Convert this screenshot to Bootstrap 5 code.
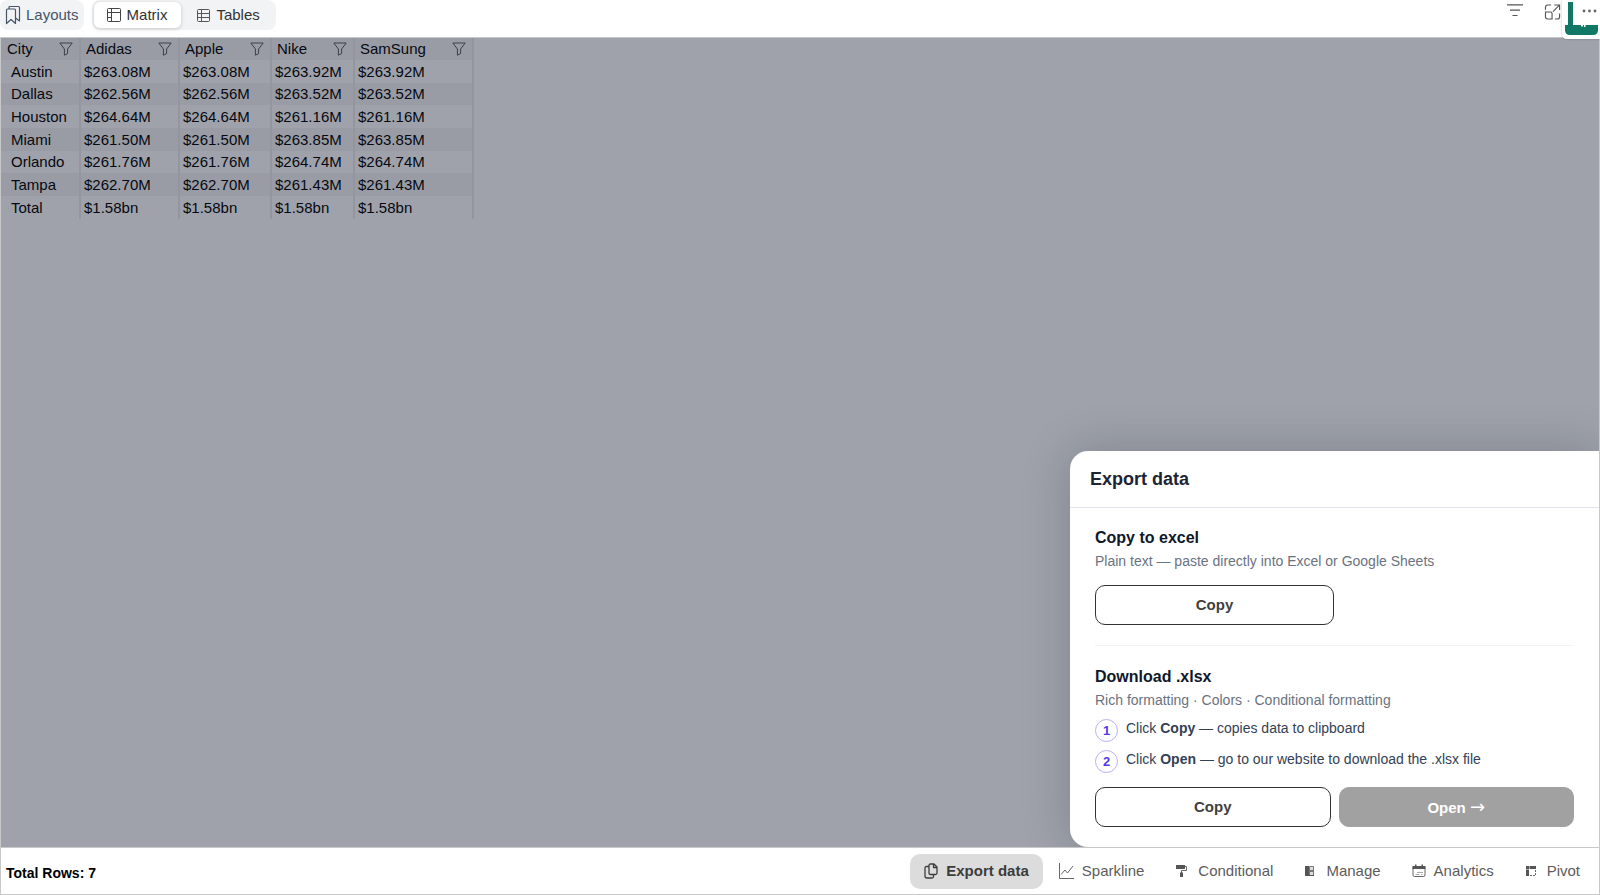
<!DOCTYPE html>
<html lang="en">
<head>
<meta charset="utf-8">
<meta name="viewport" content="width=device-width, initial-scale=1">
<title>Matrix</title>
<link href="https://cdn.jsdelivr.net/npm/bootstrap@5.3.0/dist/css/bootstrap.min.css" rel="stylesheet">
<style>
  body { font-family: "Liberation Sans", Arial, sans-serif; font-size: 15px; line-height: 20px; color: #000; background: #fff; }
  button { font-family: inherit; }
  svg { flex: none; display: block; }
  .topbar { height: 37px; }
  .tool { height: 30px; border: 0; border-radius: 8px; background: #f1f3f5; color: #475569; padding: 0 5px; gap: 5px; }
  .tab-set { height: 30px; background: #f1f3f5; border-radius: 8px; padding: 2px; gap: 2px; }
  .tab-set button { border: 0; background: transparent; color: #333; border-radius: 6px; padding: 0 14px 0 13px; gap: 6px; height: 26px; }
  .tab-set button.active { background: #fff; box-shadow: 0 1px 4px rgba(0,0,0,.18); }
  .icon-btn { border: 0; background: transparent; padding: 0; }
  .view-tools { margin-right: 38px; padding-top: 4px; gap: 21px; }
  .brand-mark { top: 0; right: 0; width: 38px; height: 39px; filter: drop-shadow(0 0 1px rgba(0,0,0,.25)); }
  .brand-mark .icon-btn { top: 7px; right: 3px; }
  .stage { border: 1px solid #c8c8c8; overflow: hidden; }
  .veil { inset: 0; background: rgba(15,23,42,.4); }
  .matrix { table-layout: fixed; width: 473px; border-collapse: separate; border-spacing: 0; }
  .matrix th, .matrix td { padding: 0 3px; border-right: 2px solid #ebebeb; white-space: nowrap; font-weight: 400; height: 23px; line-height: 22px; }
  .matrix tr:nth-child(3n+2) > * { height: 22px; }
  .matrix tr:nth-child(even) > * { background: #f6f6f6; }
  .matrix tbody tr th { padding-left: 10px; }
  .matrix thead th { height: 22px; padding: 0 6px 0 5px; background: #f6f6f6; }
  .matrix thead th:first-child { padding-left: 6px; }
  .export { right: 0; bottom: 0; width: 529px; background: #fff; border-radius: 18px 0 0 18px; box-shadow: 0 0 48px rgba(15,23,42,.22); color: #0f172a; }
  .export header { height: 57px; padding: 0 20px; border-bottom: 1px solid #e2e4ec; }
  .export h1 { font-size: 18px; line-height: 24px; font-weight: 700; color: #1e2433; }
  .export-body { padding: 19px 25px 20px; }
  .export h2 { font-size: 16px; line-height: 22px; font-weight: 700; margin: 0 0 2px; }
  .hint { font-size: 14px; line-height: 20px; color: #6b7280; margin: 0 0 14px; }
  .act { height: 40px; border-radius: 10px; border: 1px solid #333; background: #fff; color: #404040; font-weight: 700; }
  .act.half { width: 239px; }
  .act.filled { background: #a1a1a1; border-color: #a1a1a1; color: #fff; opacity: 1; }
  .arrow { font-family: "DejaVu Sans", sans-serif; font-weight: 400; font-size: 18px; line-height: 20px; }
  .rule { height: 1px; background: #f1f3f5; margin: 20px 0; }
  .steps { list-style: none; margin: 0 0 14px; padding: 0; gap: 7px; }
  .steps li { font-size: 14px; line-height: 20px; gap: 8px; color: #334155; }
  .num { width: 23px; height: 23px; border: 1px solid #b8b0fa; border-radius: 50%; font-size: 13px; font-weight: 700; color: #4f3bea; margin-top: 1px; }
  .statusbar { height: 47px; padding: 0 4px 0 5px; border: 1px solid #c8c8c8; border-top: 0; }
  .total { font-size: 14px; padding-top: 3px; }
  .actions button { border: 0; background: transparent; color: #5c5c5c; height: 35px; padding: 0 15px 0 12px; gap: 8px; border-radius: 10px; }
  .actions button.active { background: #dcdcdc; color: #3c3c3c; font-weight: 700; padding: 0 14px; }
</style>
</head>
<body class="d-flex flex-column min-vh-100">
<svg width="0" height="0" class="position-absolute" aria-hidden="true">
  <symbol id="funnel" viewBox="0 0 14 14"><path d="M.8 1h12.4L8.600 7v4.600L5.400 13.200V7z" fill="none" stroke="#5a5a5a" stroke-linejoin="round"/></symbol>
</svg>

<nav class="topbar d-flex align-items-start position-relative">
  <button class="tool d-flex align-items-center" type="button">
    <svg width="16" height="20" viewBox="0 0 16 20" fill="none" stroke="#475569" stroke-width="1.200" stroke-linejoin="round"><path d="M1.500 5q0-1 1-1h7q1 0 1 1v13.500L6 14.500l-4.500 4z"/><path d="M4 4V2.500Q4 1.500 5 1.500h8.500q1 0 1 1V16l-4-3"/></svg>
    <span>Layouts</span>
  </button>
  <div class="tab-set d-flex ms-2" role="tablist">
    <button class="active d-flex align-items-center" type="button" role="tab">
      <svg width="14" height="14" viewBox="0 0 14 14" fill="none" stroke="#444"><rect x=".5" y=".5" width="13" height="13" rx="1"/><path d="M.5 4.500h13M4.500 .5v13M.5 9.500h4"/></svg>
      <span>Matrix</span>
    </button>
    <button class="d-flex align-items-center" type="button" role="tab">
      <svg width="14" height="14" viewBox="0 0 14 14" fill="none" stroke="#555"><rect x="1.500" y="1.500" width="12" height="12" rx="1"/><path d="M1.500 5.500h12M1.500 9.500h12M5.500 1.500v12"/></svg>
      <span>Tables</span>
    </button>
  </div>
  <div class="view-tools d-flex align-items-start ms-auto">
    <button class="icon-btn" type="button" aria-label="Filters"><svg width="16" height="14" viewBox="0 0 16 14" stroke="#555" stroke-width="1.200"><path d="M0 .8h16M3 6.200h10M5.500 11.500h5"/></svg></button>
    <button class="icon-btn" type="button" aria-label="Focus mode"><svg width="18" height="16" viewBox="0 0 18 17" fill="none" stroke="#555" stroke-width="1.200"><path d="M7 1H3.500Q1 1 1 3.500V6M1 8.500h5.500q1.500 0 1.500 1.500v6H3.500Q1 16 1 13.500zM11 16h2.500q2.500 0 2.500-2.500V10M10.500 1H16v5.500M16 1L9 8"/></svg></button>
  </div>
  <div class="brand-mark position-absolute z-3">
    <svg width="38" height="39" viewBox="0 0 38 39"><path d="M0 0h38v39H5q-5 0-5-5z" fill="#fff"/><path d="M6 2h5v23h25v5q0 5-5 5H8q-5 0-5-5v-5h3z" fill="#117865"/><path d="M19 25v1.500h2V25zM22 25v2h1.500v-2z" fill="#fff"/></svg>
    <button class="icon-btn position-absolute" type="button" aria-label="More options"><svg width="15" height="8" viewBox="0 0 15 8" fill="#666"><circle cx="2" cy="4" r="1.400"/><circle cx="7.500" cy="4" r="1.400"/><circle cx="13" cy="4" r="1.400"/></svg></button>
  </div>
</nav>

<main class="stage position-relative flex-grow-1">
  <table class="matrix">
    <colgroup><col style="width:80px"><col style="width:99px"><col style="width:92px"><col style="width:83px"><col style="width:119px"></colgroup>
    <thead>
      <tr>
        <th scope="col"><div class="d-flex align-items-center justify-content-between">City <svg width="14" height="14"><use href="#funnel"/></svg></div></th>
        <th scope="col"><div class="d-flex align-items-center justify-content-between">Adidas <svg width="14" height="14"><use href="#funnel"/></svg></div></th>
        <th scope="col"><div class="d-flex align-items-center justify-content-between">Apple <svg width="14" height="14"><use href="#funnel"/></svg></div></th>
        <th scope="col"><div class="d-flex align-items-center justify-content-between">Nike <svg width="14" height="14"><use href="#funnel"/></svg></div></th>
        <th scope="col"><div class="d-flex align-items-center justify-content-between">SamSung <svg width="14" height="14"><use href="#funnel"/></svg></div></th>
      </tr>
    </thead>
    <tbody>
      <tr><th scope="row">Austin</th><td>$263.08M</td><td>$263.08M</td><td>$263.92M</td><td>$263.92M</td></tr>
      <tr><th scope="row">Dallas</th><td>$262.56M</td><td>$262.56M</td><td>$263.52M</td><td>$263.52M</td></tr>
      <tr><th scope="row">Houston</th><td>$264.64M</td><td>$264.64M</td><td>$261.16M</td><td>$261.16M</td></tr>
      <tr><th scope="row">Miami</th><td>$261.50M</td><td>$261.50M</td><td>$263.85M</td><td>$263.85M</td></tr>
      <tr><th scope="row">Orlando</th><td>$261.76M</td><td>$261.76M</td><td>$264.74M</td><td>$264.74M</td></tr>
      <tr><th scope="row">Tampa</th><td>$262.70M</td><td>$262.70M</td><td>$261.43M</td><td>$261.43M</td></tr>
      <tr><th scope="row">Total</th><td>$1.58bn</td><td>$1.58bn</td><td>$1.58bn</td><td>$1.58bn</td></tr>
    </tbody>
  </table>
  <div class="veil position-absolute"></div>
  <section class="export position-absolute" role="dialog" aria-labelledby="export-title">
    <header class="d-flex align-items-center"><h1 id="export-title" class="m-0">Export data</h1></header>
    <div class="export-body">
      <h2>Copy to excel</h2>
      <p class="hint">Plain text — paste directly into Excel or Google Sheets</p>
      <button class="act half" type="button">Copy</button>
      <div class="rule"></div>
      <h2>Download .xlsx</h2>
      <p class="hint mb-2">Rich formatting · Colors · Conditional formatting</p>
      <ol class="steps d-flex flex-column">
        <li class="d-flex"><span class="num d-flex align-items-center justify-content-center">1</span><span>Click <b>Copy</b> — copies data to clipboard</span></li>
        <li class="d-flex"><span class="num d-flex align-items-center justify-content-center">2</span><span>Click <b>Open</b> — go to our website to download the .xlsx file</span></li>
      </ol>
      <div class="d-flex gap-2">
        <button class="act flex-fill w-50" type="button">Copy</button>
        <button class="act filled flex-fill w-50" type="button" disabled>Open <span class="arrow">→</span></button>
      </div>
    </div>
  </section>
</main>

<footer class="statusbar d-flex align-items-center justify-content-between">
  <b class="total">Total Rows: 7</b>
  <div class="actions d-flex gap-1">
    <button class="active d-flex align-items-center" type="button">
      <svg width="14" height="16" viewBox="0 0 14 16" fill="none" stroke="#3c3c3c" stroke-width="1.300" stroke-linejoin="round"><path d="M6 1h4l3 3v6q0 1.500-1.500 1.500H6.500Q5 11.500 5 10V2.500Q5 1 6.500 1M9.500 1v3.500H13M5 3.500H2.500Q1 3.500 1 5v8q0 2 2 2h5q1.500 0 1.500-1.500v-2"/></svg>
      <span>Export data</span>
    </button>
    <button class="d-flex align-items-center" type="button">
      <svg width="15" height="16" viewBox="0 0 15 16" fill="none" stroke="#666"><path d="M.5 0v15.500H15M2 11.500l4-4.500 2.500 3 5.500-7"/></svg>
      <span>Sparkline</span>
    </button>
    <button class="d-flex align-items-center" type="button">
      <svg width="15" height="14" viewBox="0 0 15 14"><path d="M1 1h9v4H1z" fill="#555"/><path d="M10 2.500h1.500v4h-5V9" fill="none" stroke="#666"/><path d="M5 8.500h3V13H5z" fill="#555"/></svg>
      <span>Conditional</span>
    </button>
    <button class="d-flex align-items-center" type="button">
      <svg width="14" height="14" viewBox="0 0 14 14"><path d="M1 2h4v10H1z" fill="#555"/><path d="M5.500 2.500h4v9h-4z" fill="#ddd" stroke="#777"/><path d="M6 6h4v2H6z" fill="#777"/><path d="M5 11h5v1H5z" fill="#555"/></svg>
      <span>Manage</span>
    </button>
    <button class="d-flex align-items-center" type="button">
      <svg width="14" height="14" viewBox="0 0 14 14"><rect x="1" y="2.500" width="12" height="10" rx="1.500" fill="none" stroke="#666"/><path d="M.5 2h13v3H.5zM3 .5h1.500v2H3zM9.500 .5H11v2H9.500z" fill="#555"/><path d="M3.500 10.500h4M5 8.500h6M9 10.500h1.500" stroke="#aaa"/></svg>
      <span>Analytics</span>
    </button>
    <button class="d-flex align-items-center" type="button">
      <svg width="14" height="14" viewBox="0 0 14 14"><path d="M1 2h3v3H1zM4.500 2H11v3H4.500zM1 5.500h3V12H1z" fill="#555"/><path d="M10.500 6v5.500H5" fill="none" stroke="#666" stroke-dasharray="2 1"/></svg>
      <span>Pivot</span>
    </button>
  </div>
</footer>
<script src="https://cdn.jsdelivr.net/npm/bootstrap@5.3.0/dist/js/bootstrap.bundle.min.js"></script>
</body>
</html>
